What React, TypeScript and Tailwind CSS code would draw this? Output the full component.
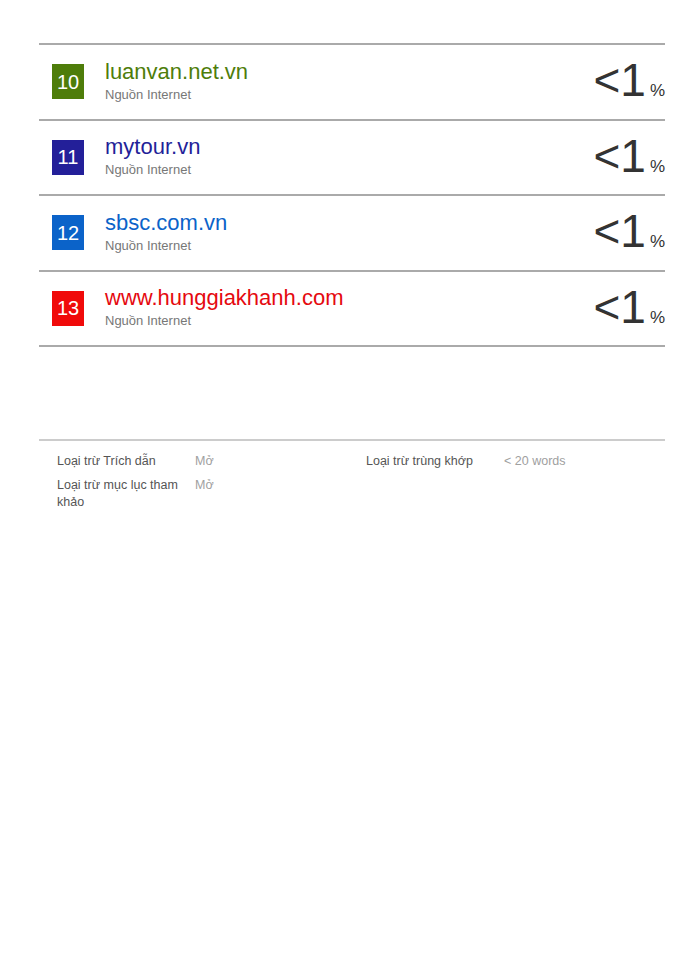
const sources = [
  { n: 10, name: 'luanvan.net.vn', badge: 'bg-[#4e7d0a]', text: 'text-[#4e7d0a]' },
  { n: 11, name: 'mytour.vn', badge: 'bg-[#231f99]', text: 'text-[#231f99]' },
  { n: 12, name: 'sbsc.com.vn', badge: 'bg-[#0b63c9]', text: 'text-[#0b63c9]' },
  { n: 13, name: 'www.hunggiakhanh.com', badge: 'bg-[#f00a0a]', text: 'text-[#e5090f]' },
];

export default function App() {
  return (
    <div className="min-h-screen w-[700px] bg-white font-['Liberation_Sans',Arial,sans-serif]">
      <div className="ml-[39px] mr-[35px] pt-[43px]">
        <div className="border-t-2 border-[#aaaaaa]">
          {sources.map(s => (
            <div key={s.n} className="h-[75.5px] border-b-2 border-[#aaaaaa] flex items-center">
              <div className={`ml-[13px] w-[32px] h-[35px] ${s.badge} text-white text-[20px] flex items-center justify-center`}>
                {s.n}
              </div>
              <div className="ml-[21px] flex-1 -mt-[2px]">
                <div className={`${s.text} text-[22px] leading-[26px]`}>{s.name}</div>
                <div className="text-[#777777] text-[13px] leading-[16px] mt-[2px]">Nguồn Internet</div>
              </div>
              <div className="flex items-baseline text-[#333333] -mt-[3px]">
                <span className="text-[46px] leading-none">&lt;1</span>
                <span className="text-[17px] ml-[4px]">%</span>
              </div>
            </div>
          ))}
        </div>

        <div className="mt-[92px] border-t-2 border-[#cccccc] pt-[12px] grid grid-cols-2 text-[12.5px] leading-[17px]">
          <div className="pl-[18px] space-y-[7px]">
            <div className="flex">
              <span className="w-[138px] text-[#555555]">Loại trừ Trích dẫn</span>
              <span className="text-[#a0a0a0]">Mở</span>
            </div>
            <div className="flex">
              <span className="w-[138px] pr-[8px] text-[#555555]">Loại trừ mục lục tham khảo</span>
              <span className="text-[#a0a0a0]">Mở</span>
            </div>
          </div>
          <div className="pl-[14px]">
            <div className="flex">
              <span className="w-[138px] text-[#555555]">Loại trừ trùng khớp</span>
              <span className="text-[#a0a0a0]">&lt; 20 words</span>
            </div>
          </div>
        </div>
      </div>
    </div>
  );
}
